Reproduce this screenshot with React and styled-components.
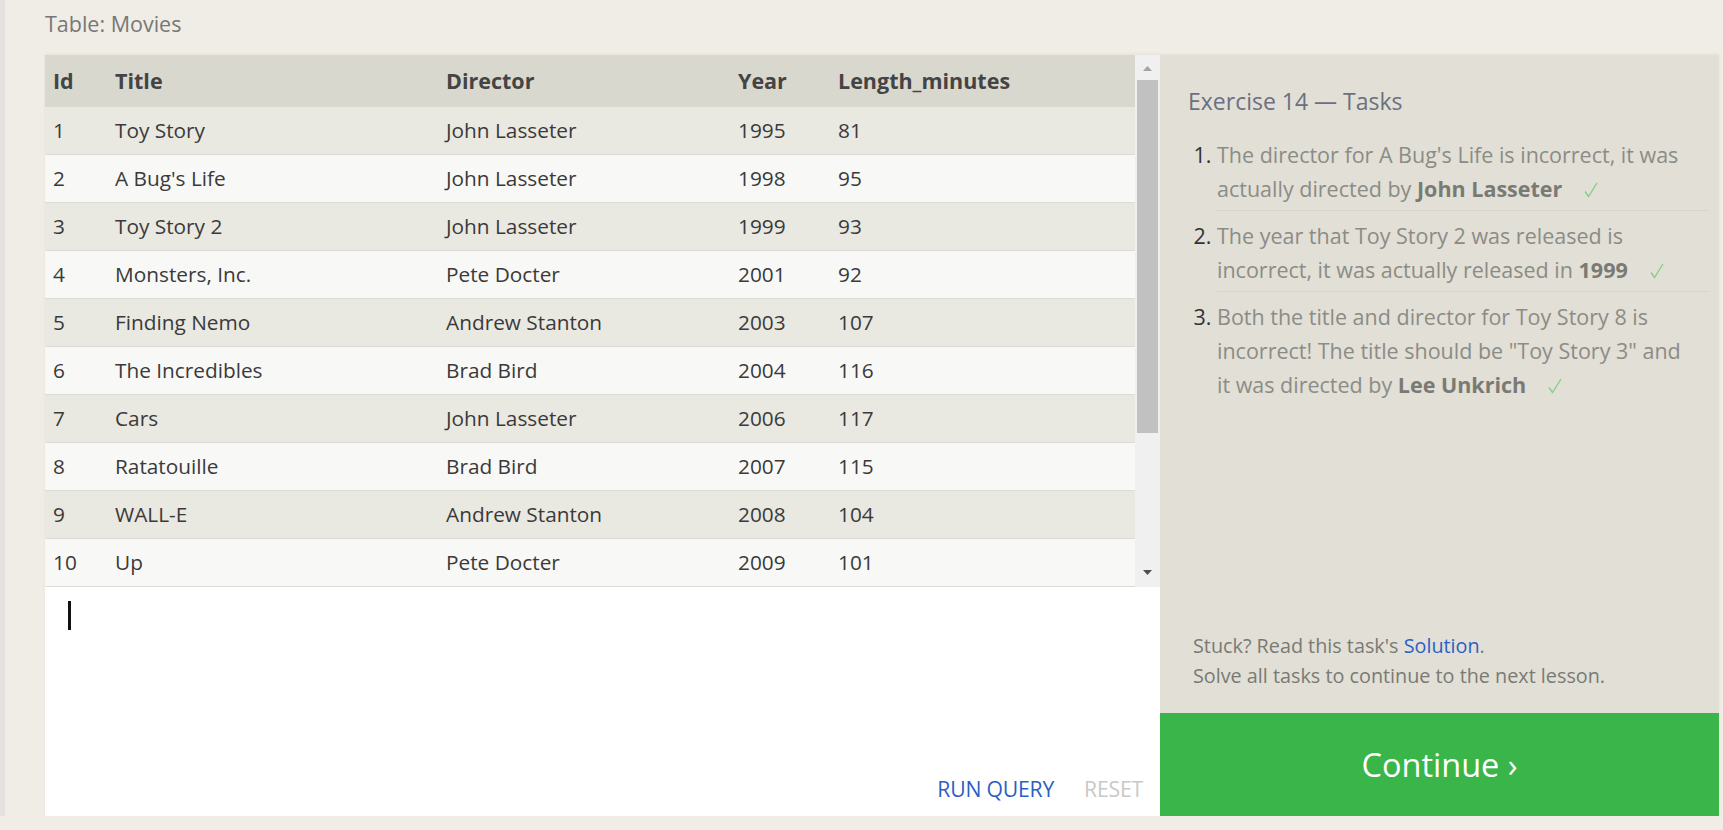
import React from 'react'
import styled, { createGlobalStyle } from 'styled-components'

const movies = [
    [1, 'Toy Story', 'John Lasseter', 1995, 81],
    [2, "A Bug's Life", 'John Lasseter', 1998, 95],
    [3, 'Toy Story 2', 'John Lasseter', 1999, 93],
    [4, 'Monsters, Inc.', 'Pete Docter', 2001, 92],
    [5, 'Finding Nemo', 'Andrew Stanton', 2003, 107],
    [6, 'The Incredibles', 'Brad Bird', 2004, 116],
    [7, 'Cars', 'John Lasseter', 2006, 117],
    [8, 'Ratatouille', 'Brad Bird', 2007, 115],
    [9, 'WALL-E', 'Andrew Stanton', 2008, 104],
    [10, 'Up', 'Pete Docter', 2009, 101],
    [11, 'Toy Story 3', 'Lee Unkrich', 2010, 103],
    [12, 'Cars 2', 'John Lasseter', 2011, 120],
    [13, 'Brave', 'Brenda Chapman', 2012, 102],
    [14, 'Monsters University', 'Dan Scanlon', 2013, 110],
]

const columns = [
    { name: 'Id', width: 62 },
    { name: 'Title', width: 331 },
    { name: 'Director', width: 292 },
    { name: 'Year', width: 100 },
    { name: 'Length_minutes' },
]

const GlobalStyle = createGlobalStyle`
    html, body {
        margin: 0;
        padding: 0;
    }
    body {
        background: #efede6;
        border-left: 5px solid #e4e2de;
        font-family: "Open Sans", "Noto Sans", sans-serif;
        color: #333;
    }
`

const Page = styled.div`
    padding: 9px 4px 0 40px;
`

const TableLabel = styled.div`
    font-size: 21.5px;
    line-height: 30px;
    color: #777;
    margin-bottom: 16px;
`

const Workspace = styled.div`
    display: flex;
    height: 761px;
    box-shadow: 0 -1px 3px rgba(0, 0, 0, .05);
`

const QueryPanel = styled.div`
    width: 1115px;
    display: flex;
    flex-direction: column;
    background: #fff;
`

const TableArea = styled.div`
    display: flex;
    height: 532px;
`

const TableClip = styled.div`
    flex: 1;
    overflow: hidden;
    background: #f8f8f7;
`

const Scrollbar = styled.div`
    width: 25px;
    display: flex;
    flex-direction: column;
    background: #f0f0f0;
`

const ScrollButton = styled.div`
    height: 25px;
    display: flex;
    justify-content: center;
    align-items: ${props => props.down ? 'flex-start' : 'flex-end'};
    padding: ${props => props.down ? '8px 0 0' : '0 0 9px'};
    box-sizing: border-box;
`

const ScrollTrack = styled.div`
    flex: 1;
    padding: 0 2px;
`

const ScrollThumb = styled.div`
    height: 353px;
    background: #c1c1c1;
`

const Table = styled.table`
    width: 100%;
    border-collapse: collapse;
    font-size: 20.8px;
`

const HeadCell = styled.th`
    background: #d9d8ce;
    color: #444;
    font-size: 21.5px;
    font-weight: 700;
    text-align: left;
    height: 52px;
    padding: 0 8px 2px;
    width: ${props => props.width ? `${props.width}px` : 'auto'};
    box-sizing: border-box;
    white-space: nowrap;
`

const Row = styled.tr`
    background: ${props => props.odd ? '#e9e8e1' : '#f8f8f7'};
    border-bottom: 1px solid #dcdbd5;
`

const Cell = styled.td`
    height: 45px;
    padding: 0 8px 2px;
    color: #3a3a3a;
    white-space: nowrap;
`

const Editor = styled.div`
    flex: 1;
    display: flex;
    flex-direction: column;
    justify-content: space-between;
    padding: 14px 17px 12px 23px;
`

const Caret = styled.div`
    width: 3px;
    height: 29px;
    background: #111;
`

const EditorActions = styled.div`
    display: flex;
    justify-content: flex-end;
    gap: 30px;
`

const ActionButton = styled.span`
    font-size: 21.2px;
    line-height: 30px;
    letter-spacing: -.2px;
    color: ${props => props.disabled ? '#c8c8c8' : '#2c5fc4'};
`

const TaskPanel = styled.div`
    flex: 1;
    display: flex;
    flex-direction: column;
    background: #e1dfd6;
`

const TaskBody = styled.div`
    flex: 1;
    padding: 31px 10px 0 28px;
`

const TaskTitle = styled.div`
    font-size: 23px;
    line-height: 30px;
    color: #6b7080;
    margin-bottom: 22px;
`

const TaskList = styled.ol`
    margin: 0;
    padding-left: 29px;
`

const Task = styled.li`
    font-size: 21.5px;
    line-height: 34px;
    color: #8c8c86;
    padding: 0 19px 4px 0;
    margin-bottom: 8px;
    border-bottom: ${props => props.last ? 'none' : '1px solid #d6d4cb'};

    &::marker {
        color: #333;
    }

    b {
        color: #7a7a75;
    }
`

const Check = styled.svg`
    margin-left: 22px;
    vertical-align: -1px;
`

const Help = styled.div`
    padding: 0 10px 22px 33px;
    font-size: 19.8px;
    line-height: 30px;
    color: #7a7a75;

    a {
        color: #2c5fc4;
        text-decoration: none;
    }
`

const ContinueButton = styled.div`
    height: 103px;
    background: #3ab54a;
    color: #fff;
    font-size: 32.5px;
    display: flex;
    align-items: center;
    justify-content: center;
`

const Arrow = ({ down }) => (
    <svg width="9" height="5" viewBox="0 0 9 5">
        {down
            ? <path d="M0 0 L9 0 L4.5 5 Z" fill="#505050" />
            : <path d="M0 5 L9 5 L4.5 0 Z" fill="#a3a3a3" />}
    </svg>
)

const CheckMark = () => (
    <Check width="14" height="16" viewBox="0 0 14 16">
        <path d="M1 9.5 L4.5 14.5 L13 1" fill="none" stroke="#86cf86" strokeWidth="1.4" />
    </Check>
)

const App = () => {
    return (
        <Page>
            <GlobalStyle />
            <TableLabel>Table: Movies</TableLabel>
            <Workspace>
                <QueryPanel>
                    <TableArea>
                        <TableClip>
                            <Table>
                                <thead>
                                    <tr>
                                        {columns.map(col => (
                                            <HeadCell key={col.name} width={col.width}>{col.name}</HeadCell>
                                        ))}
                                    </tr>
                                </thead>
                                <tbody>
                                    {movies.map((movie, i) => (
                                        <Row key={movie[0]} odd={i % 2 === 0}>
                                            {movie.map((value, j) => <Cell key={j}>{value}</Cell>)}
                                        </Row>
                                    ))}
                                </tbody>
                            </Table>
                        </TableClip>
                        <Scrollbar>
                            <ScrollButton><Arrow /></ScrollButton>
                            <ScrollTrack>
                                <ScrollThumb />
                            </ScrollTrack>
                            <ScrollButton down><Arrow down /></ScrollButton>
                        </Scrollbar>
                    </TableArea>
                    <Editor>
                        <Caret />
                        <EditorActions>
                            <ActionButton>RUN QUERY</ActionButton>
                            <ActionButton disabled>RESET</ActionButton>
                        </EditorActions>
                    </Editor>
                </QueryPanel>
                <TaskPanel>
                    <TaskBody>
                        <TaskTitle>Exercise 14 — Tasks</TaskTitle>
                        <TaskList>
                            <Task>
                                The director for A Bug's Life is incorrect, it was actually directed by <b>John Lasseter</b>
                                <CheckMark />
                            </Task>
                            <Task>
                                The year that Toy Story 2 was released is incorrect, it was actually released in <b>1999</b>
                                <CheckMark />
                            </Task>
                            <Task last>
                                Both the title and director for Toy Story 8 is incorrect! The title should be "Toy Story 3" and it was directed by <b>Lee Unkrich</b>
                                <CheckMark />
                            </Task>
                        </TaskList>
                    </TaskBody>
                    <Help>
                        Stuck? Read this task's <a href="#">Solution</a>.<br />
                        Solve all tasks to continue to the next lesson.
                    </Help>
                    <ContinueButton>Continue ›</ContinueButton>
                </TaskPanel>
            </Workspace>
        </Page>
    )
}

export default App
